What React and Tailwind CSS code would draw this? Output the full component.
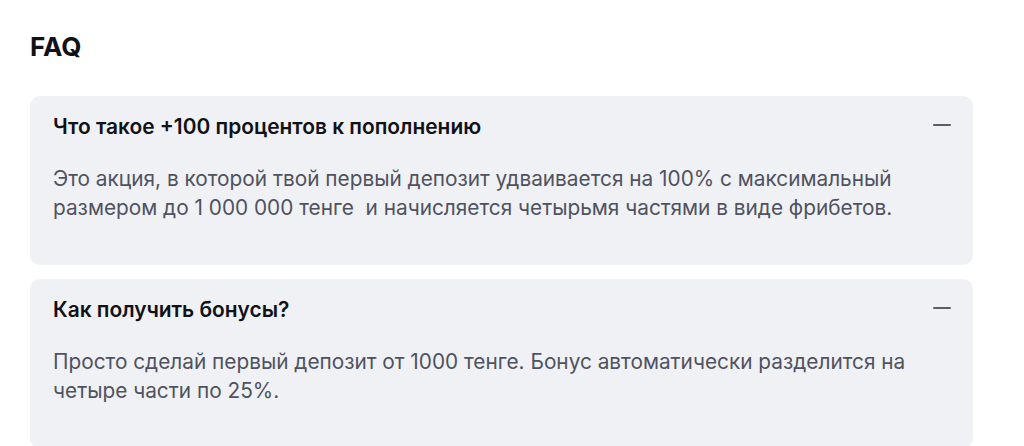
import React, { useState } from 'react';

const faqs = [
    {
        q: 'Что такое +100 процентов к пополнению',
        a: 'Это акция, в которой твой первый депозит удваивается на 100% с максимальный размером до 1 000 000 тенге  и начисляется четырьмя частями в виде фрибетов.',
    },
    {
        q: 'Как получить бонусы?',
        a: 'Просто сделай первый депозит от 1000 тенге. Бонус автоматически разделится на четыре части по 25%.',
    },
];

function FaqItem({ item }) {
    const [open, setOpen] = useState(true);
    return (
        <div className="bg-[#f0f1f5] rounded-[10px] pl-[23px] pr-[22px] pt-[20px] pb-[43px]">
            <button
                onClick={() => setOpen(!open)}
                className="w-full flex items-center justify-between text-left"
            >
                <span className="text-[20.9px] leading-[22px] font-semibold text-[#111218]">{item.q}</span>
                <span className="block w-[18px] h-[2px] bg-[#5b5e6a] rounded-full -mt-[4px]"></span>
            </button>
            {open && (
                <p className="mt-[26px] text-[20.8px] leading-[29px] text-[#4f5260] whitespace-pre-wrap">
                    {item.a}
                </p>
            )}
        </div>
    );
}

export default function App() {
    return (
        <div className="min-h-[446px] bg-white px-[30px] pt-[33px] pr-[51px] overflow-hidden" style={{ fontFamily: 'Inter, "Noto Sans", sans-serif' }}>
            <h2 className="text-[26px] leading-[28px] font-bold text-[#111218] mb-[35px]">FAQ</h2>
            <div className="flex flex-col gap-[14px]">
                {faqs.map((item, i) => (
                    <FaqItem key={i} item={item} />
                ))}
            </div>
        </div>
    );
}
